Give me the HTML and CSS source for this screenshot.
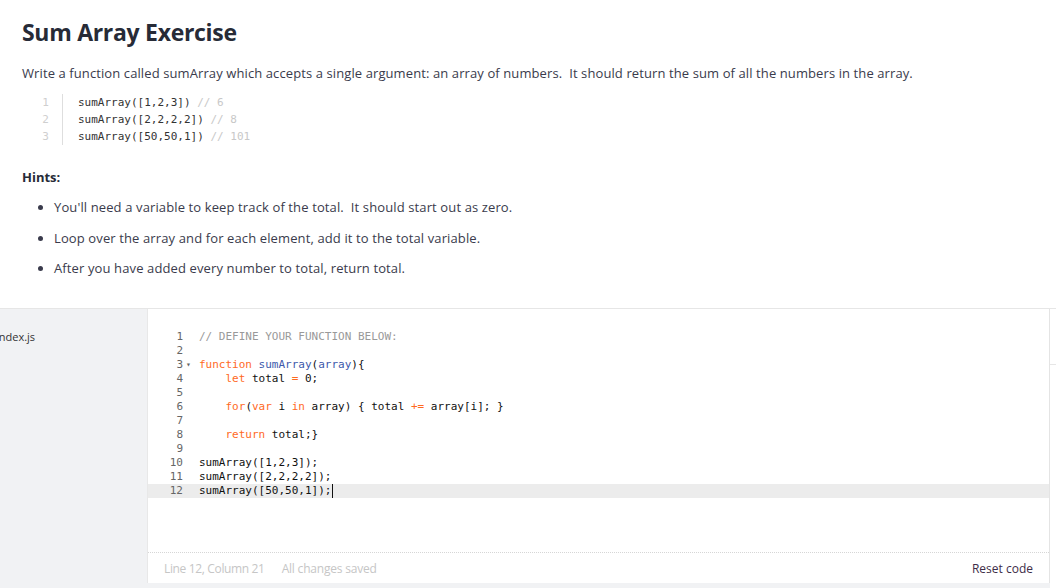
FILE: index.html
```html
<!DOCTYPE html>
<html lang="en">
<head>
<meta charset="utf-8">
<title>Sum Array Exercise</title>
<link rel="stylesheet" href="styles.css">
</head>
<body>
<div class="page">
  <section class="problem">
    <h1 class="title">Sum Array Exercise</h1>
    <p class="desc">Write a function called sumArray which accepts a single argument: an array of numbers.&nbsp; It should return the sum of all the numbers in the array.</p>
    <div class="snippet">
      <div class="snippet-nums"><div>1</div><div>2</div><div>3</div></div>
      <div class="snippet-code">
        <div>sumArray([1,2,3]) <span class="s-com">// 6</span></div>
        <div>sumArray([2,2,2,2]) <span class="s-com">// 8</span></div>
        <div>sumArray([50,50,1]) <span class="s-com">// 101</span></div>
      </div>
    </div>
    <h4 class="hints-title">Hints:</h4>
    <ul class="hints">
      <li>You'll need a variable to keep track of the total.&nbsp; It should start out as zero.</li>
      <li>Loop over the array and for each element, add it to the total variable.</li>
      <li>After you have added every number to total, return total.</li>
    </ul>
  </section>
  <section class="workspace">
    <aside class="files">
      <div class="file">index.js</div>
    </aside>
    <div class="editor">
      <div class="code">
        <div class="row"><span class="ln">1</span><span class="fold"></span><span class="txt"><span class="c-com">// DEFINE YOUR FUNCTION BELOW:</span></span></div>
        <div class="row"><span class="ln">2</span><span class="fold"></span><span class="txt"></span></div>
        <div class="row"><span class="ln">3</span><span class="fold">&#9662;</span><span class="txt"><span class="c-kw">function</span> <span class="c-fn">sumArray</span>(<span class="c-fn">array</span>){</span></div>
        <div class="row"><span class="ln">4</span><span class="fold"></span><span class="txt">    <span class="c-kw">let</span> total <span class="c-kw">=</span> 0;</span></div>
        <div class="row"><span class="ln">5</span><span class="fold"></span><span class="txt"></span></div>
        <div class="row"><span class="ln">6</span><span class="fold"></span><span class="txt">    <span class="c-kw">for</span>(<span class="c-kw">var</span> i <span class="c-kw">in</span> array) { total <span class="c-kw">+=</span> array[i]; }</span></div>
        <div class="row"><span class="ln">7</span><span class="fold"></span><span class="txt"></span></div>
        <div class="row"><span class="ln">8</span><span class="fold"></span><span class="txt">    <span class="c-kw">return</span> total;}</span></div>
        <div class="row"><span class="ln">9</span><span class="fold"></span><span class="txt"></span></div>
        <div class="row"><span class="ln">10</span><span class="fold"></span><span class="txt">sumArray([1,2,3]);</span></div>
        <div class="row"><span class="ln">11</span><span class="fold"></span><span class="txt">sumArray([2,2,2,2]);</span></div>
        <div class="row active"><span class="ln">12</span><span class="fold"></span><span class="txt">sumArray([50,50,1]);<span class="cursor"></span></span></div>
      </div>
      <div class="status">
        <span class="pos">Line 12, Column 21</span>
        <span class="saved">All changes saved</span>
        <span class="reset">Reset code</span>
      </div>
    </div>
    <aside class="side">
      <div class="side-top"></div>
    </aside>
  </section>
</div>
</body>
</html>
```

FILE: styles.css
```css
* { box-sizing: border-box; }
html, body { margin: 0; padding: 0; }
body {
  font-family: "Open Sans", "Noto Sans", sans-serif;
  font-size: 13px;
  color: #3a3b4c;
  background: #fff;
}
.page {
  height: 588px;
  display: flex;
  flex-direction: column;
  overflow: hidden;
}
.problem {
  padding: 0 22px 30px;
}
.title {
  margin: 16px 0 0;
  font-size: 23px;
  letter-spacing: -0.3px;
  line-height: 32px;
  font-weight: 700;
  color: #272b37;
}
.desc {
  margin: 15px 0 0;
  line-height: 20px;
  letter-spacing: 0.1px;
}
.snippet {
  margin: 11px 0 0 18px;
  display: flex;
  font-family: "DejaVu Sans Mono", "Liberation Mono", monospace;
  font-size: 11px;
  line-height: 17px;
}
.snippet-nums {
  width: 23px;
  padding-right: 11px;
  text-align: center;
  color: #cfcfcf;
  border-right: 1px solid #dedede;
}
.snippet-code {
  padding-left: 15px;
  color: #333;
}
.snippet-code div { white-space: pre; }
.s-com { color: #c8c8c8; }
.hints-title {
  margin: 22px 0 0;
  font-size: 13px;
  line-height: 20px;
  font-weight: 700;
  color: #272b37;
}
.hints {
  margin: 10px 0 0;
  padding-left: 32px;
  letter-spacing: 0.12px;
}
.hints li {
  line-height: 20px;
  margin-bottom: 10.5px;
}
.hints li:last-child { margin-bottom: 0; }

.workspace {
  flex: 1;
  display: flex;
  border-top: 1px solid #e6e6e6;
  background: #f1f2f4;
}
.files {
  width: 147px;
  padding-top: 19px;
}
.file {
  margin-left: -4px;
  font-size: 11px;
  line-height: 18px;
  color: #333;
}
.editor {
  flex: 1;
  display: flex;
  flex-direction: column;
  background: #fff;
  border-left: 1px solid #e8e8e8;
  border-right: 1px solid #e4e4e4;
  margin-bottom: 5px;
}
.code {
  flex: 1;
  padding-top: 21px;
  font-family: "DejaVu Sans Mono", "Liberation Mono", monospace;
  font-size: 11px;
}
.row {
  display: flex;
  height: 14px;
  line-height: 14px;
  white-space: pre;
  color: #111;
}
.row.active { background: #ececec; }
.ln {
  width: 35px;
  text-align: right;
  color: #666;
}
.fold {
  width: 16px;
  padding-left: 3px;
  font-size: 8px;
  color: #666;
}
.txt { white-space: pre; }
.c-kw { color: #ff6a1f; }
.c-fn { color: #3d59ab; }
.c-com { color: #999; }
.cursor {
  display: inline-block;
  width: 1px;
  height: 14px;
  vertical-align: top;
  background: #111;
  margin-left: 1px;
}
.status {
  height: 31px;
  border-top: 1px dotted #d6d6d6;
  display: flex;
  align-items: center;
  padding: 0 16px;
  font-size: 12px;
}
.pos { color: #c6c6c6; letter-spacing: -0.35px; }
.saved { color: #c6c6c6; margin-left: 17px; letter-spacing: -0.2px; }
.reset { margin-left: auto; color: #3d2d48; }
.side {
  width: 6px;
  background: #fff;
}
.side-top {
  height: 56px;
  border-bottom: 1px solid #e6e6e6;
}
```
